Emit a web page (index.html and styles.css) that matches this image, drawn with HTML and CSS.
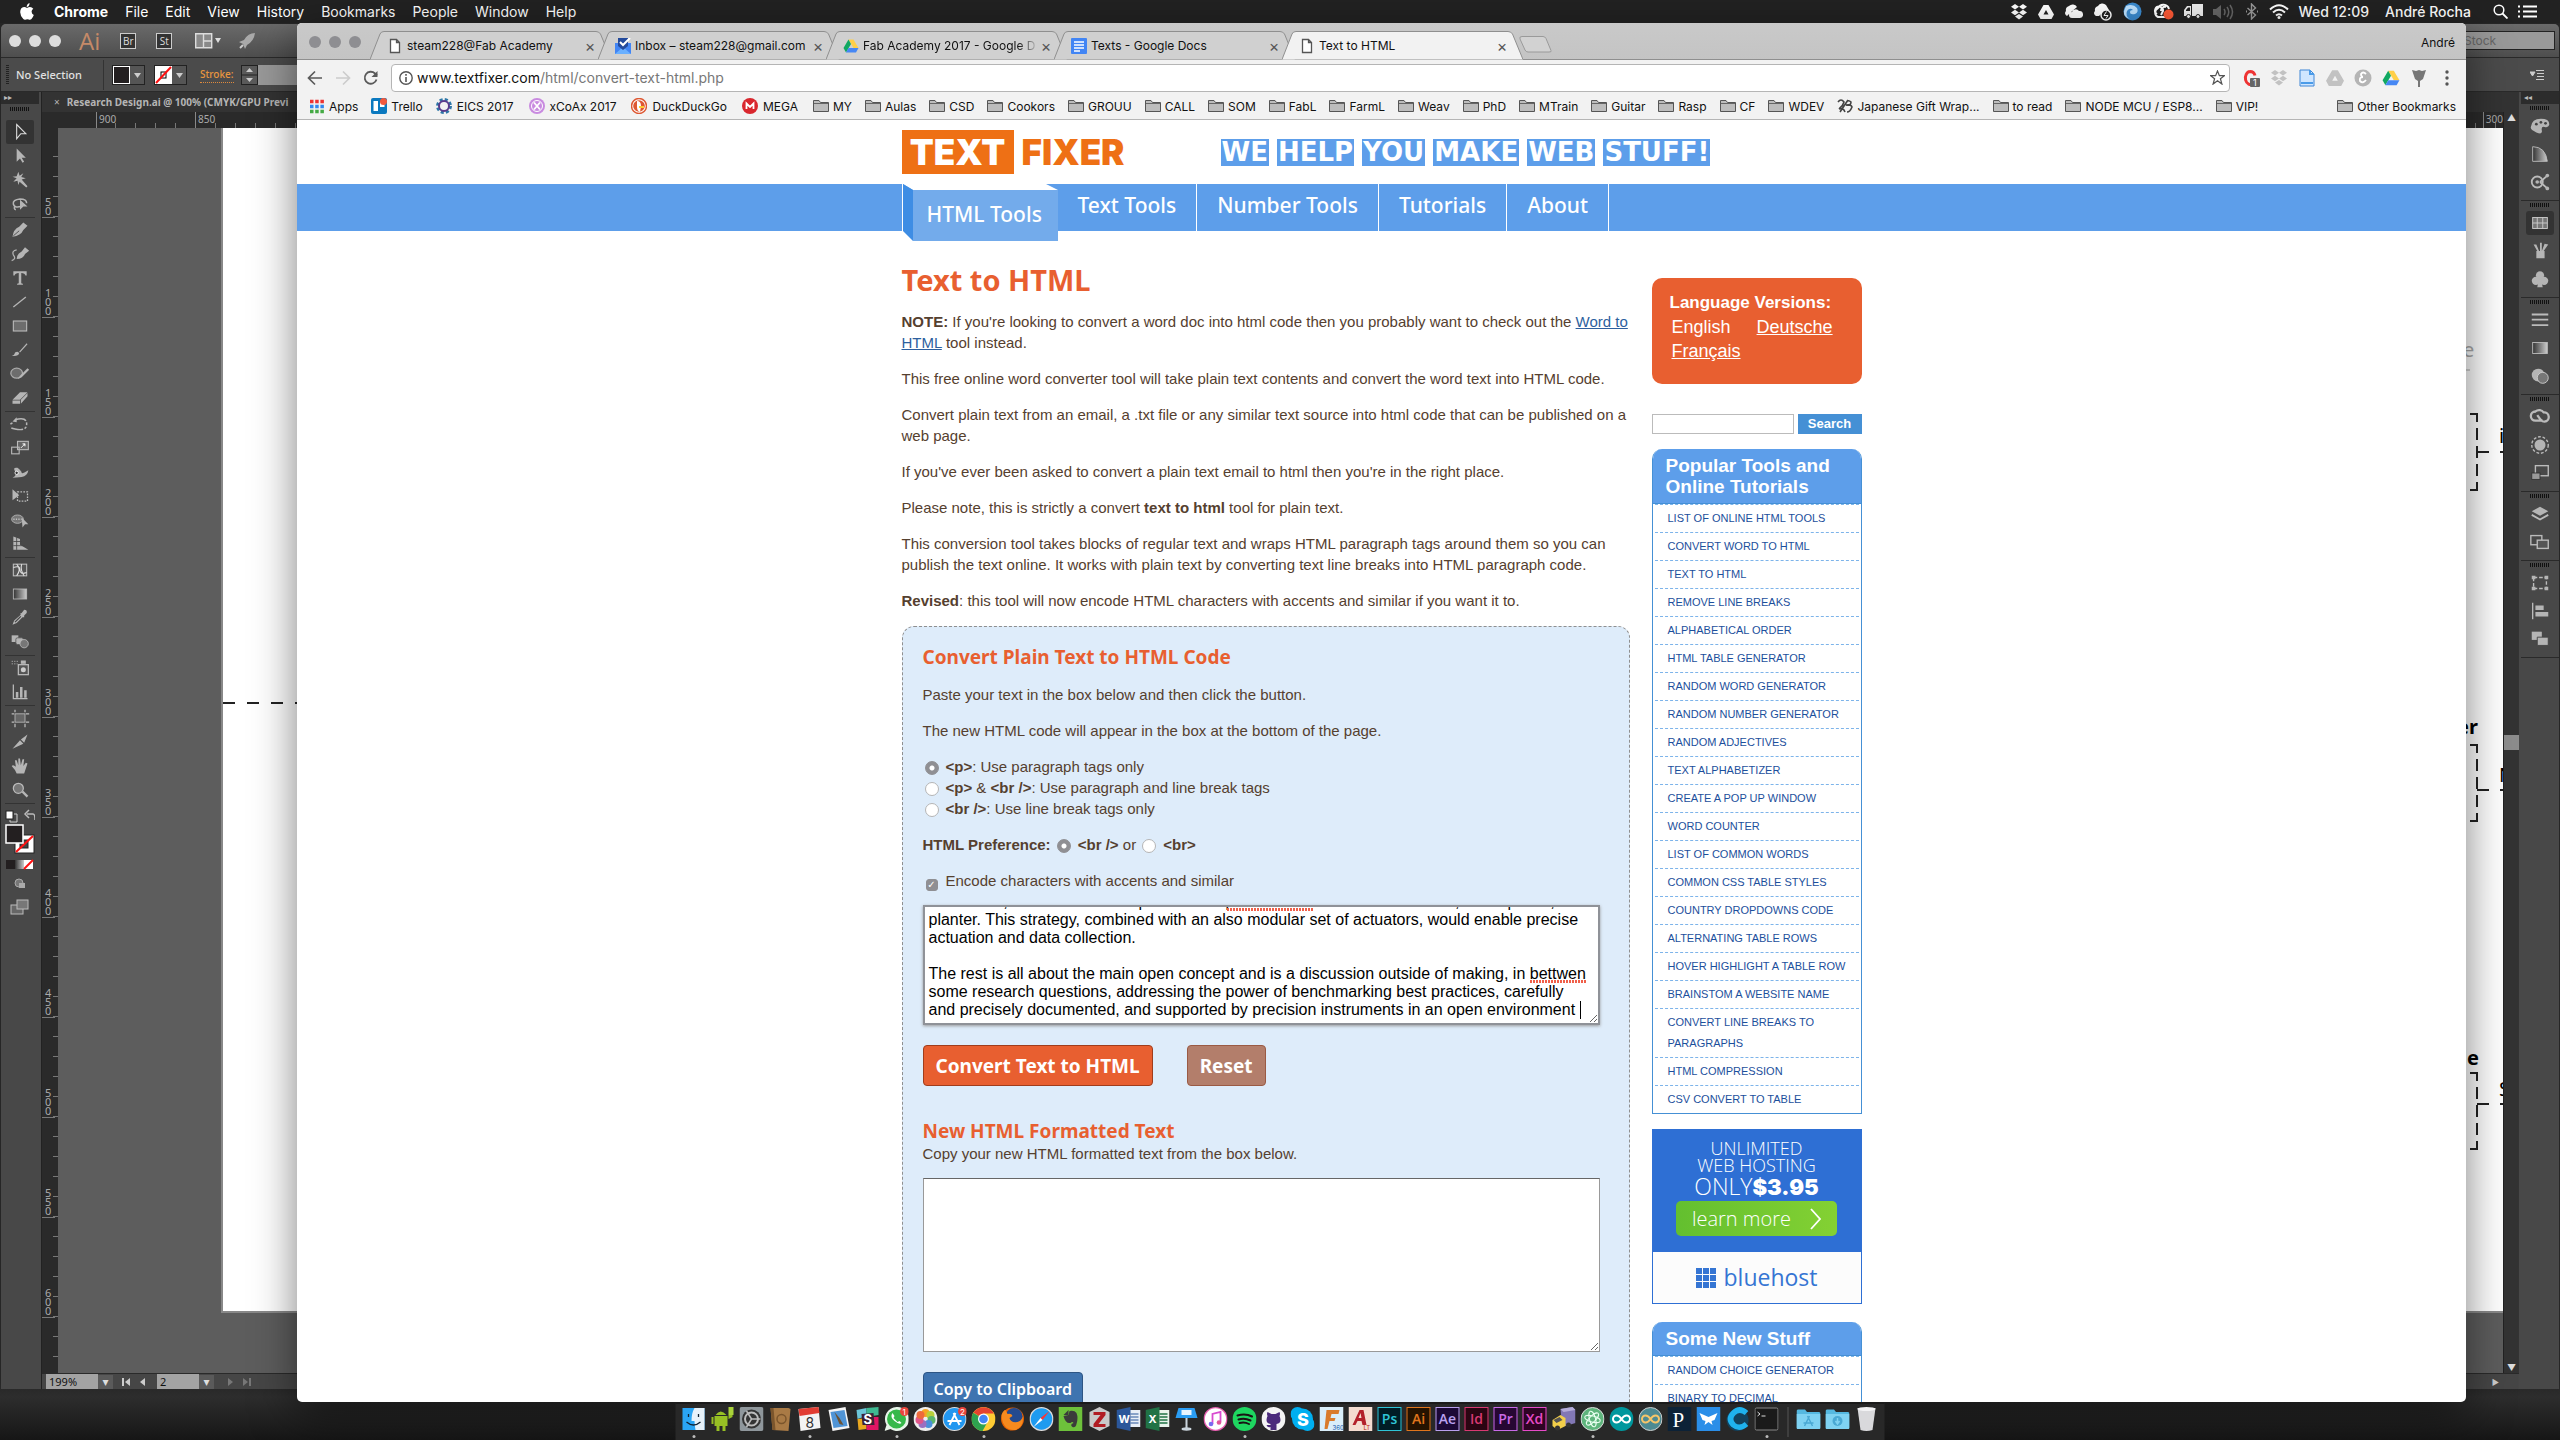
FILE: index.html
```html
<!DOCTYPE html>
<html lang="en">
<head>
<meta charset="utf-8">
<title>Text to HTML</title>
<link rel="stylesheet" href="styles.css">
</head>
<body>
<svg class="defs" width="0" height="0" aria-hidden="true">
  <defs>
    <symbol id="folder" viewBox="0 0 16 16"><path d="M.5 13.500V2.500h5.500l1.500 2h8v9z" fill="#bdbdbd" stroke="#555"/><path d="M1 5.500h14" stroke="#666"/></symbol>
    <symbol id="page" viewBox="0 0 16 16"><path d="M3.500 1.500h6l3 3v10h-9zM9.500 1.500v3h3" fill="#fff" stroke="#555" stroke-width="1.300"/></symbol>
    <symbol id="drive" viewBox="0 0 16 16"><path d="M5.500 1.500h5l5 8.500h-5z" fill="#ffcf48"/><path d="M5.500 1.500L8 6 3 14.500.5 10z" fill="#11a861"/><path d="M5.500 10h10L13 14.500H3z" fill="#4687f4"/></symbol>
    <symbol id="dropbox" viewBox="0 0 18 18"><path d="M5 1l4 2.700-4 2.700-4-2.700zM13 1l4 2.700-4 2.700-4-2.700zM5 6.800l4 2.700-4 2.700-4-2.700zM13 6.800l4 2.700-4 2.700-4-2.700zM9 11l4 2.600L9 16.500l-4-2.900z" fill="currentColor"/></symbol>
    <symbol id="drivemono" viewBox="0 0 16 16"><path d="M5.500 1h5l5.500 9.500-2.500 4.500h-11L0 10.500zM8 6l-2.500 4.500h5z" fill="currentColor" fill-rule="evenodd"/></symbol>
    <symbol id="tabshape" viewBox="0 0 241 29"><path d="M0 28.500L10 3Q11 .5 14 .5H226Q229 .5 230.500 3L241 28.500" fill="currentColor" stroke="#8f8f8f"/></symbol>
    <linearGradient id="fade" x1="0" x2="1"><stop offset="0" stop-color="#333"/><stop offset="1" stop-color="#ccc"/></linearGradient>
    <symbol id="arduino" viewBox="0 0 24 24"><path d="M12 12c-2-3-3.500-3.500-5-3.500a3.500 3.500 0 0 0 0 7c1.500 0 3-.5 5-3.500s3.500-3.500 5-3.500a3.500 3.500 0 0 1 0 7c-1.500 0-3-.5-5-3.500z" fill="none" stroke="currentColor" stroke-width="2"/></symbol>
    <symbol id="dockfolder" viewBox="0 0 24 24"><path d="M0 4q0-1.500 1.500-1.500h7l2 2.500h12q1.500 0 1.500 1.500v14q0 1.500-1.500 1.500h-21Q0 22 0 20.500z" fill="#55b8e0"/><path d="M0 7h24v13.500q0 1.500-1.500 1.500h-21Q0 22 0 20.500z" fill="#7fd2f2"/></symbol>
  </defs>
</svg>

<div class="desktop">
  <header class="menubar">
    <nav class="menus" aria-label="Application menu">
      <svg width="14" height="17" viewBox="0 0 14 17"><path d="M9.500 0Q9.700 2 8.500 3.200 7.500 4.200 6.700 4 6.600 2.500 7.600 1.300 8.500.3 9.500 0zM7 5Q8.500 4 10 4q2 0 3.300 1.700Q11.500 7 11.600 8.800 11.700 11 13.800 12q-.8 2.300-2.300 4-1.200 1.200-2.800.5Q7.400 16 6 16.500q-1.500.7-2.700-.5Q.3 13 .2 9.300.2 4.700 4 4.100 5.500 4 7 5z" fill="#fff"/></svg>
      <b>Chrome</b><span>File</span><span>Edit</span><span>View</span><span>History</span><span>Bookmarks</span><span>People</span><span>Window</span><span>Help</span>
    </nav>
    <div class="status">
      <svg width="18" height="18"><use href="#dropbox"/></svg>
      <svg width="16" height="16"><use href="#drivemono"/></svg>
      <svg width="19" height="16" viewBox="0 0 19 16"><path d="M3 12a3 3 0 0 1-1-5 4 4 0 0 1 3-5 5 5 0 0 1 8 1L6 9zM8 14a3 3 0 0 1 0-6 4 4 0 0 1 7-1 3.500 3.500 0 0 1 1 7z" fill="#fff"/></svg>
      <svg width="20" height="18" viewBox="0 0 20 18"><path d="M3 13a3 3 0 0 1-1-5 4 4 0 0 1 3-5 5 5 0 0 1 8-1l3 5-6 2-4 4z" fill="#fff"/><circle cx="13" cy="12" r="5" fill="#222" stroke="#fff" stroke-width="1.500"/><path d="M13.500 8.500l-2.500 4h4l-2 3" stroke="#fff" fill="none"/></svg>
      <svg width="19" height="19" viewBox="0 0 19 19"><circle cx="9.500" cy="9.500" r="9" fill="#3b8bd0"/><path d="M3 4q7-3 11 2 2 4-2 6-5 1-5-2 0-2 3-2-3-3-6 1-2 5 3 8-7-2-6-8z" fill="#bfe3ff"/></svg>
      <svg width="22" height="18" viewBox="0 0 22 18"><path d="M14 14H6a5 5 0 0 1 0-9 6 6 0 0 1 11 1M5 11a4 4 0 1 1 6-3l-2 4M9 8a4 4 0 0 1 5-4" fill="none" stroke="#fff" stroke-width="2"/><circle cx="16.500" cy="11.500" r="5" fill="#ff5a36"/></svg>
      <svg width="19" height="15" viewBox="0 0 19 15"><path d="M0 12V6l3-4h4v10zM8 0h11v12H8z" fill="#eee"/><path d="M2 6l2-2.500h2V7H2z" fill="#222"/><circle cx="4.500" cy="12.500" r="2" fill="#eee" stroke="#222"/><circle cx="14" cy="12.500" r="2" fill="#eee" stroke="#222"/></svg>
      <svg width="22" height="16" viewBox="0 0 22 16"><path d="M0 5h3l5-4v14l-5-4H0z" fill="#666"/><path d="M11 5q2 3 0 6M14 3q3.500 5 0 10M17 1q5 7 0 14" fill="none" stroke="#666" stroke-width="1.500"/></svg>
      <svg width="14" height="17" viewBox="0 0 14 17"><path d="M2.500 5l8 7-4 4V1l4 4-8 7" fill="none" stroke="#9a9a9a" stroke-width="1.400"/><path d="M1 8.500h1M12 8.500h1" stroke="#9a9a9a" stroke-width="2"/></svg>
      <svg width="20" height="15" viewBox="0 0 20 15"><path d="M1 5.500q9-8.500 18 0M4 8.500q6-5.500 12 0M7 11.500q3-2.500 6 0" fill="none" stroke="#fff" stroke-width="2"/><circle cx="10" cy="13.500" r="1.500" fill="#fff"/></svg>
      <span class="clock">Wed 12:09</span><span class="who">André Rocha</span>
      <svg width="15" height="15" viewBox="0 0 15 15"><circle cx="6" cy="6" r="4.800" fill="none" stroke="#fff" stroke-width="1.500"/><path d="M9.500 9.500l5 5" stroke="#fff" stroke-width="1.800"/></svg>
      <svg width="19" height="13" viewBox="0 0 19 13"><path d="M0 1.500h2M0 6.500h2M0 11.500h2M5 1.500h14M5 6.500h14M5 11.500h14" stroke="#fff" stroke-width="2"/></svg>
    </div>
  </header>

  <section class="ai" aria-label="Illustrator">
    <div class="ai-title">
      <i class="light"></i><i class="light"></i><i class="light"></i>
      <span class="ai-logo">Ai</span>
      <span class="chip">Br</span><span class="chip">St</span>
      <svg class="ai-arr" width="27" height="16" viewBox="0 0 27 16"><path d="M.7.700h16v14H.7zM8.500 1v14M9 8h8" fill="#8a8a8a" stroke="#ddd" stroke-width="1.400"/><path d="M20 5h6l-3 5z" fill="#ddd"/></svg>
      <svg width="18" height="18" viewBox="0 0 18 18"><path d="M17 1q-7 0-11 7L1 10l4 2 2 5 2-4q7-4 8-12z" fill="#aaa"/><path d="M2 16l3-3" stroke="#ccc" stroke-width="2"/></svg>
      <span class="stock">Stock</span>
    </div>
    <div class="ai-control">
      <i class="grip-v"></i><span class="nosel">No Selection</span>
      <svg width="33" height="20" viewBox="0 0 33 20"><rect x=".5" y=".5" width="32" height="19" fill="#555" stroke="#222"/><rect x="1.500" y="1.500" width="16" height="17" fill="#231f20" stroke="#fff"/><path d="M22 8h7l-3.500 5z" fill="#ccc"/></svg>
      <svg width="33" height="20" viewBox="0 0 33 20"><rect x=".5" y=".5" width="32" height="19" fill="#555" stroke="#222"/><rect x="1" y="1" width="17" height="18" fill="#fff"/><rect x="7" y="7" width="5" height="6" fill="none" stroke="#000"/><path d="M2 18L17 2" stroke="#f11" stroke-width="2"/><path d="M22 8h7l-3.500 5z" fill="#ccc"/></svg>
      <span class="stroke">Stroke:</span>
      <svg width="17" height="20" viewBox="0 0 17 20"><rect x=".5" y=".5" width="16" height="19" fill="#5a5a5a" stroke="#222"/><path d="M.5 10h16" stroke="#222"/><path d="M5 7h7L8.500 3zM5 13h7l-3.500 4z" fill="#ccc"/></svg>
      <i class="strokefield"></i>
      <svg class="ctl-menu" width="14" height="12" viewBox="0 0 14 12"><path d="M0 3h5L2.500 7zM6 1.500h8M7 4.500h7M7 7.500h7M6 10.500h8" fill="#ccc" stroke="#ccc"/></svg>
    </div>
    <div class="ai-work">
      <aside class="tools">
        <div class="coll">▸▸</div>
        <i class="grip"></i>
        <div class="tool-list">
          <div class="grp">
            <svg class="on" viewBox="0 0 24 24"><path d="M8 3l11 11h-6l-5 6z" fill="#333" stroke="#ddd" stroke-width="1.300"/></svg>
            <svg viewBox="0 0 24 24"><path d="M8 3l11 11h-5l3 5-2 1-3-5-4 4z"/></svg>
            <svg viewBox="0 0 24 24"><path d="M10 2l1.500 5L16 4l-2.500 4.500L19 10l-5 1.500 7 8-1.500 1.500-8-7L10 18l-1-5-5 1 4-4-5-2 5-.5z"/></svg>
            <svg viewBox="0 0 24 24"><path d="M13 15q-8 2-9-3t8-6q8 0 8 5M6 14q-2 4 1 5" fill="none" stroke="#b5b5b5" stroke-width="1.800"/><path d="M12 7l9 8h-5l-4 4z"/></svg>
          </div>
          <div class="grp">
            <svg viewBox="0 0 24 24"><path d="M3 20q1-9 8-12l5-5 5 4-5 5q-3 7-13 8z"/><path d="M4 19l7-6" stroke="#444"/></svg>
            <svg viewBox="0 0 24 24"><path d="M8 18q0-6 6-9l4-5 5 4-5 4q-2 6-10 6z"/><path d="M2 20q6-2 2-7-2-5 4-6" fill="none" stroke="#b5b5b5" stroke-width="1.500"/></svg>
            <svg viewBox="0 0 24 24"><path d="M4 4h16v5h-1.500q-.5-3-5-3v12q0 1 2 1v1H8.500v-1q2 0 2-1V6q-4.500 0-5 3H4z"/></svg>
            <svg viewBox="0 0 24 24"><path d="M4 18L19 6" stroke="#b5b5b5" stroke-width="1.500"/></svg>
            <svg viewBox="0 0 24 24"><rect x="4" y="6" width="16" height="12" fill="#6d6d6d" stroke="#bbb" stroke-width="1.300"/></svg>
            <svg viewBox="0 0 24 24"><path d="M2 19q3 0 4-4 4-2 5 1-1 4-9 3zM11 14l9-10 1 1-9 10z"/></svg>
            <svg viewBox="0 0 24 24"><ellipse cx="8" cy="11" rx="7" ry="6" fill="#6d6d6d" stroke="#aaa" stroke-width="1.500"/><path d="M9 18l3-4 9-9 2 2-9 9z"/></svg>
            <svg viewBox="0 0 24 24"><path d="M3 14l9-9h9l-9 9zM3 15h9v4H3zM13 14l8-8v4l-8 9z"/></svg>
          </div>
          <div class="grp">
            <svg viewBox="0 0 24 24"><path d="M6 7q14-4 14 5t-14 6-1-8" fill="none" stroke="#b5b5b5" stroke-width="1.800" stroke-dasharray="14 2 3 2 3 2"/><path d="M3 9l5-5v6z"/></svg>
            <svg viewBox="0 0 24 24"><rect x="9" y="4" width="13" height="10" fill="#666" stroke="#bbb" stroke-width="1.300"/><rect x="2" y="11" width="9" height="8" fill="none" stroke="#bbb" stroke-width="1.300"/><path d="M13 12l5-5M15 7h3v3" stroke="#fff"/></svg>
            <svg viewBox="0 0 24 24"><path d="M3 19q6-3 3-8t3-4q5 4 5 6t8-3q-1 7-8 8t-11 1z"/><circle cx="8" cy="13" r="2" fill="#333" stroke="#fff"/></svg>
            <svg viewBox="0 0 24 24"><path d="M3 4l8 7-8 6z"/><rect x="9" y="7" width="12" height="11" fill="none" stroke="#bbb" stroke-dasharray="2 1.500" stroke-width="1.500"/></svg>
            <svg viewBox="0 0 24 24"><ellipse cx="9" cy="11" rx="7" ry="5" fill="#777" stroke="#bbb"/><path d="M4 11h10" stroke="#fff" stroke-dasharray="1.500"/><path d="M14 9l8 8h-4l-3 4z"/></svg>
            <svg viewBox="0 0 24 24"><path d="M4 3l8 3v7l10 6H4z"/><path d="M4 9h10M4 14h14M8 4v15" stroke="#444"/></svg>
          </div>
          <div class="grp">
            <svg viewBox="0 0 24 24"><rect x="4" y="5" width="16" height="14" fill="#555" stroke="#bbb" stroke-width="1.300"/><path d="M4 9q8-3 8 3t8 3M8 5q6 6 0 14M14 5q-2 7 3 14" fill="none" stroke="#ddd" stroke-width="1.300"/></svg>
            <svg viewBox="0 0 24 24"><rect x="4" y="6" width="16" height="12" fill="url(#fade)" stroke="#bbb"/></svg>
            <svg viewBox="0 0 24 24"><path d="M3 20l2-5 8-7-1-1 2-1 3-4q4 0 3 4l-3 3 0 2-2 0-7 7z"/><path d="M6 17l7-7" stroke="#444" stroke-width="1.500"/></svg>
            <svg viewBox="0 0 24 24"><rect x="2" y="4" width="8" height="8"/><rect x="7" y="7" width="9" height="8" rx="2" stroke="#555"/><circle cx="17" cy="14" r="5" fill="#777" stroke="#bbb"/></svg>
          </div>
          <div class="grp">
            <svg viewBox="0 0 24 24"><rect x="10" y="8" width="12" height="12" fill="#555" stroke="#bbb" stroke-width="1.500"/><circle cx="16" cy="14" r="3" fill="#ccc"/><rect x="13" y="3" width="6" height="4"/><path d="M2 4h9M2 7h7" stroke="#bbb" stroke-dasharray="1.500"/></svg>
            <svg viewBox="0 0 24 24"><path d="M4 3v17h17" fill="none" stroke="#bbb" stroke-width="1.500"/><path d="M7 12h3v7H7zM12 6h3v13h-3zM17 10h3v9h-3z"/></svg>
          </div>
          <div class="grp">
            <svg viewBox="0 0 24 24"><rect x="6" y="7" width="12" height="10" fill="#666" stroke="#bbb"/><path d="M2 7h3M2 17h3M19 7h4M19 17h4M6 2v3M18 2v3M6 19v4M18 19v4" stroke="#bbb" stroke-width="1.500"/></svg>
            <svg viewBox="0 0 24 24"><path d="M3 20l9-10 4 4zM13 9l8-6-4 10z"/></svg>
            <svg viewBox="0 0 24 24"><path d="M8 21q-2-5-6-9 2-2 5 1L6 5h2l2 6V3h2l1 8 2-7h2l-1 8 3-4 2 1-4 12z"/></svg>
            <svg viewBox="0 0 24 24"><ellipse cx="10" cy="10" rx="6" ry="6" fill="#777" stroke="#bbb" stroke-width="1.500"/><path d="M14 15l2-2 6 6-2 2z"/></svg>
          </div>
          <div class="swatches">
            <svg width="30" height="110" viewBox="0 0 30 110"><rect x="1" y="3" width="7" height="8" fill="#fff" stroke="#222"/><path d="M9 6h3v8H5v-2" fill="none" stroke="#ccc"/><path d="M22 6h6q2 0 2 6M24 2l-4 4 4 4" fill="none" stroke="#bbb" stroke-width="1.500"/><rect x="10" y="27" width="19" height="18" fill="#fff" stroke="#222"/><rect x="15" y="32" width="8" height="8" fill="#444" stroke="#222"/><path d="M11 44L28 28" stroke="#f11" stroke-width="2"/><rect x="1" y="17" width="17" height="18" fill="#231f20" stroke="#fff" stroke-width="1.500"/><rect x="1" y="52" width="9" height="9" fill="#231f20"/><rect x="10" y="52" width="9" height="9" fill="url(#fade)"/><rect x="19" y="52" width="9" height="9" fill="#fff"/><path d="M19 61l9-9" stroke="#f11" stroke-width="2"/><circle cx="14" cy="75" r="4" fill="#777" stroke="#aaa"/><rect x="14" y="75" width="6" height="5" fill="#aaa"/><rect x="6" y="97" width="12" height="9" fill="#666" stroke="#bbb"/><rect x="12" y="92" width="11" height="9" fill="#777" stroke="#bbb"/></svg>
          </div>
        </div>
      </aside>
      <div class="doc">
        <div class="doctab"><span>×</span><b>Research Design.ai @ 100% (CMYK/GPU Previ</b></div>
        <div class="ruler-h"><span>900</span><span>850</span><span class="r300">300</span></div>
        <div class="docbody">
          <div class="ruler-v"><span>50</span><span>100</span><span>150</span><span>200</span><span>250</span><span>300</span><span>350</span><span>400</span><span>450</span><span>500</span><span>550</span><span>600</span></div>
          <div class="canvas">
            <div class="artboard"><i class="cutline"></i>
              <svg class="diagram" width="40" height="820" viewBox="0 0 40 820"><g fill="none" stroke="#222" stroke-width="2"><path d="M7 72h7v8M14 86v12M14 104v12M14 122v12M14 140v8H7M14 110h12M37 110h3M7 403h7v8M14 417v12M14 435v12M14 453v12M14 471v8H7M14 448h12M37 448h3M7 731h7v8M14 745v12M14 763v12M14 781v12M14 799v8H7M14 762h12M37 762h3"/></g><text x="0" y="15" fill="#aaa">e</text><path d="M0 28h7" stroke="#aaa"/><text x="36" y="101">in</text><text x="-6" y="392" font-weight="700">er</text><text x="36" y="440">N</text><text x="-2" y="723" font-weight="700">le</text><text x="36" y="754">S</text></svg>
            </div>
          </div>
          <div class="vscroll"><span>▲</span><i></i><span>▼</span></div>
        </div>
        <div class="statusbar"><span class="zoomv">199%</span><i class="dd">▾</i>
          <svg width="32" height="10" viewBox="0 0 32 10"><path d="M1 1h2v8H1zM9 1v8L4 5zM24 1v8l-5-4z" fill="#ccc"/></svg>
          <span class="pagev">2</span><i class="dd">▾</i>
          <svg width="32" height="10" viewBox="0 0 32 10"><path d="M6 1v8l5-4zM21 1v8l5-4zM27 1h2v8h-2z" fill="#777"/></svg><i class="play">▶</i></div>
      </div>
      <aside class="panels">
        <div class="coll">◂◂</div>
        <div class="pg"><i class="grip"></i>
          <svg viewBox="0 0 24 24"><path d="M2 13Q3 4 13 4t9 7q-1 3-5 2t-3 4-6 2-6-6z"/><circle cx="8" cy="10" r="1.500" fill="#444"/><circle cx="13" cy="8" r="1.500" fill="#444"/><circle cx="18" cy="9" r="1.500" fill="#444"/></svg>
          <svg viewBox="0 0 24 24"><path d="M4 4q14 0 16 16H4z" fill="url(#fade)" stroke="#bbb"/></svg>
          <svg viewBox="0 0 24 24"><circle cx="9" cy="12" r="6" fill="none" stroke="#bbb" stroke-width="2"/><circle cx="9" cy="12" r="2"/><path d="M12 12l8-7M12 12l8 7" stroke="#bbb" stroke-width="2"/><circle cx="20" cy="5" r="2"/><circle cx="20" cy="19" r="2"/></svg></div>
        <div class="pg"><i class="grip"></i>
          <svg class="on" viewBox="0 0 24 24"><rect x="4" y="6" width="16" height="12" fill="#777" stroke="#ccc"/><path d="M4 12h16M9 6v12M15 6v12" stroke="#ccc"/></svg>
          <svg viewBox="0 0 24 24"><path d="M8 12h9v8H8zM9 12L5 5l3 0 3 7zM12 12V3h2v9zM14 12l3-8 4 1-5 7z"/></svg>
          <svg viewBox="0 0 24 24"><circle cx="12" cy="8" r="4.500"/><circle cx="7.500" cy="14" r="4.500"/><circle cx="16.500" cy="14" r="4.500"/><path d="M11 12h2l2 9H9z"/></svg></div>
        <div class="pg"><i class="grip"></i>
          <svg viewBox="0 0 24 24"><path d="M3 6h18M3 11.500h18M3 17.500h18" stroke="#bbb" stroke-width="2"/></svg>
          <svg viewBox="0 0 24 24"><rect x="4" y="6" width="16" height="12" fill="url(#fade)" stroke="#bbb"/></svg>
          <svg viewBox="0 0 24 24"><circle cx="10" cy="11" r="7"/><circle cx="15" cy="14" r="6" fill="#777" stroke="#ccc"/></svg></div>
        <div class="pg"><i class="grip"></i>
          <svg viewBox="0 0 24 24"><path d="M15 16H7a5 5 0 0 1 0-10 6 6 0 0 1 9 1 5 5 0 0 1 1 10q-3 0-5-3l-3-4" fill="none" stroke="#bbb" stroke-width="2.500"/></svg>
          <svg viewBox="0 0 24 24"><circle cx="12" cy="12" r="9" fill="none" stroke="#bbb" stroke-width="1.500" stroke-dasharray="3 2"/><circle cx="12" cy="12" r="6"/></svg>
          <svg viewBox="0 0 24 24"><rect x="7" y="4" width="14" height="11" fill="none" stroke="#bbb" stroke-width="1.500"/><rect x="3" y="12" width="9" height="7" fill="#999" stroke="#333"/></svg></div>
        <div class="pg"><i class="grip"></i>
          <svg viewBox="0 0 24 24"><path d="M12 4l9 5-9 5-9-5z"/><path d="M3 13l9 5 9-5" fill="none" stroke="#bbb" stroke-width="2"/></svg>
          <svg viewBox="0 0 24 24"><rect x="2" y="5" width="12" height="10" fill="none" stroke="#bbb" stroke-width="1.500"/><rect x="9" y="10" width="12" height="9" fill="#555" stroke="#bbb" stroke-width="1.500"/></svg></div>
        <div class="pg"><i class="grip"></i>
          <svg viewBox="0 0 24 24"><rect x="5" y="6" width="14" height="12" fill="none" stroke="#bbb" stroke-width="1.500" stroke-dasharray="4 2"/><path d="M3 4h4v4H3zM17 4h4v4h-4zM3 16h4v4H3zM17 16h4v4h-4z"/></svg>
          <svg viewBox="0 0 24 24"><path d="M4 3v18" stroke="#bbb" stroke-width="1.500"/><path d="M7 6h9v5H7zM7 13h14v5H7z"/></svg>
          <svg viewBox="0 0 24 24"><path d="M3 4h11v9H3z"/><path d="M9 10h12v9H9z" stroke="#444"/></svg></div>
      </aside>
    </div>
  </section>

  <section class="chrome" aria-label="Browser">
    <div class="tabstrip">
      <i class="dot"></i><i class="dot"></i><i class="dot"></i>
      <div class="tabs">
        <div class="tab"><svg class="shape"><use href="#tabshape"/></svg><svg class="fav"><use href="#page"/></svg><span>steam228@Fab Academy</span><button aria-label="Close">×</button></div>
        <div class="tab"><svg class="shape"><use href="#tabshape"/></svg><svg class="fav" viewBox="0 0 16 16"><path d="M0 5h16v11H0z" fill="#4285f4"/><path d="M0 16l8-7 8 7z" fill="#6ab0ff"/><path d="M3 0h10v8l-5 4-5-4z" fill="#234a9c"/><path d="M5 4l3 3 7-7" fill="none" stroke="#fff" stroke-width="2"/></svg><span>Inbox – steam228@gmail.com</span><button aria-label="Close">×</button></div>
        <div class="tab"><svg class="shape"><use href="#tabshape"/></svg><svg class="fav"><use href="#drive"/></svg><span class="long">Fab Academy 2017 - Google D</span><button aria-label="Close">×</button></div>
        <div class="tab"><svg class="shape"><use href="#tabshape"/></svg><svg class="fav" viewBox="0 0 16 16"><rect width="16" height="16" rx="1" fill="#4285f4"/><path d="M3 4h10M3 7h10M3 10h10M3 13h6" stroke="#fff" stroke-width="1.300"/></svg><span>Texts - Google Docs</span><button aria-label="Close">×</button></div>
        <div class="tab active"><svg class="shape"><use href="#tabshape"/></svg><svg class="fav"><use href="#page"/></svg><span>Text to HTML</span><button aria-label="Close">×</button></div>
      </div>
      <svg class="newtab" width="34" height="17" viewBox="0 0 34 17"><path d="M1 3Q0 .5 3 .5H24q2 0 3 2l5 12q1 1.500-2 1.500H9q-2 0-3-2z" fill="#d2d2d2" stroke="#9a9a9a"/></svg>
      <span class="profile">André</span>
    </div>
    <div class="toolbar">
      <button aria-label="Back"><svg width="16" height="16" viewBox="0 0 16 16"><path d="M15 8H2M8 1.500L1.500 8 8 14.500" fill="none" stroke="#5a5a5a" stroke-width="1.700"/></svg></button>
      <button aria-label="Forward"><svg width="16" height="16" viewBox="0 0 16 16"><path d="M1 8h13M8 1.500L14.500 8 8 14.500" fill="none" stroke="#ccc" stroke-width="1.700"/></svg></button>
      <button aria-label="Reload"><svg width="16" height="16" viewBox="0 0 16 16"><path d="M13.500 9.500A6 6 0 1 1 12 3.500L14 5.500" fill="none" stroke="#5a5a5a" stroke-width="1.800"/><path d="M14.500 1v6h-6z" fill="#5a5a5a"/></svg></button>
      <div class="urlbar">
        <svg width="14" height="14" viewBox="0 0 14 14"><circle cx="7" cy="7" r="6.200" fill="none" stroke="#555" stroke-width="1.400"/><path d="M7 6v5M7 3v1.700" stroke="#555" stroke-width="1.600"/></svg>
        <span class="url"><b>www.textfixer.com</b>/html/convert-text-html.php</span>
        <svg width="15" height="15" viewBox="0 0 16 16"><path d="M8 1l2 5h5.300l-4.200 3.300L12.700 15 8 11.500 3.300 15l1.600-5.700L.7 6H6z" fill="none" stroke="#555" stroke-width="1.300"/></svg>
      </div>
      <div class="exts">
        <svg viewBox="0 0 18 18"><path d="M8 2.500a5 6.500 0 1 0 3 12M8 2.500q4 0 5 4" fill="none" stroke="#e33" stroke-width="3"/><rect x="8" y="9" width="10" height="9" rx="1" fill="#666"/><text x="11" y="17" font-size="9" fill="#fff" font-family="Inter">1</text></svg>
        <svg class="grey"><use href="#dropbox"/></svg>
        <svg viewBox="0 0 18 18"><path d="M2 1h10l4 4v12H2z" fill="#cfe6ff" stroke="#3f86d6"/><path d="M12 1v4h4M3 14h12" fill="none" stroke="#4a9be8" stroke-width="2"/></svg>
        <svg class="grey"><use href="#drivemono"/></svg>
        <svg viewBox="0 0 18 18"><circle cx="9" cy="9" r="8.500" fill="#b5b5b5"/><path d="M12 5q-3-3-5 0 0 3 2 3-4 0-3 4 3 3 6-1" fill="none" stroke="#fff" stroke-width="1.800"/></svg>
        <svg><use href="#drive"/></svg>
        <svg viewBox="0 0 18 18"><path d="M2 1l4 1 3-1 3 1 4-1-3 9-3 2v6H8v-6l-3-2z" fill="#777"/></svg>
        <svg viewBox="0 0 18 18"><circle cx="9" cy="3" r="1.700" fill="#555"/><circle cx="9" cy="9" r="1.700" fill="#555"/><circle cx="9" cy="15" r="1.700" fill="#555"/></svg>
      </div>
    </div>
    <nav class="bookmarks" aria-label="Bookmarks">
      <a href="#"><svg viewBox="0 0 16 16"><path d="M1 3.500h14" stroke="#e33" stroke-width="3.500" stroke-dasharray="3.500 1.700"/><path d="M1 8.500h14" stroke="#38e" stroke-width="3.500" stroke-dasharray="3.500 1.700"/><path d="M1 13.500h14" stroke="#4a4" stroke-width="3.500" stroke-dasharray="3.500 1.700"/></svg>Apps</a>
      <a href="#"><svg viewBox="0 0 16 16"><rect y="0" width="16" height="16" rx="2" fill="#0b79bf"/><path d="M2.500 3h4.500v10H2.500zM9 3h4.500v6H9z" fill="#fff"/><circle cx="12.500" cy="3.500" r="3.500" fill="#f1583c"/></svg>Trello</a>
      <a href="#" class="site"><svg viewBox="0 0 16 16"><circle cx="8" cy="8" r="6.500" fill="none" stroke="#2d77a8" stroke-width="3" stroke-dasharray="3 2.100"/><circle cx="8" cy="8" r="5" fill="none" stroke="#5a3b8c" stroke-width="2"/></svg>EICS 2017</a>
      <a href="#" class="site"><svg viewBox="0 0 16 16"><circle cx="8" cy="8" r="8" fill="#c98be0"/><circle cx="8" cy="8" r="5.500" fill="none" stroke="#fff"/><path d="M5 4.500l6 7M11 4.500l-6 7" stroke="#fff" stroke-width="1.800"/></svg>xCoAx 2017</a>
      <a href="#" class="site"><svg viewBox="0 0 16 16"><circle cx="8" cy="8" r="7.500" fill="#fff" stroke="#de5833" stroke-width="1.500"/><circle cx="8" cy="8" r="5.800" fill="#de5833"/><path d="M6 3q4 0 4 5l-1 6q-3-1-3-5z" fill="#fff"/><path d="M8 8h5v2H8z" fill="#fc3"/></svg>DuckDuckGo</a>
      <a href="#" class="site"><svg viewBox="0 0 16 16"><circle cx="8" cy="8" r="8" fill="#d9272e"/><path d="M4.500 11V5.500L8 9l3.500-3.500V11" fill="none" stroke="#fff" stroke-width="1.800"/></svg>MEGA</a>
      <a href="#"><svg><use href="#folder"/></svg>MY</a>
      <a href="#"><svg><use href="#folder"/></svg>Aulas</a>
      <a href="#"><svg><use href="#folder"/></svg>CSD</a>
      <a href="#"><svg><use href="#folder"/></svg>Cookors</a>
      <a href="#"><svg><use href="#folder"/></svg>GROUU</a>
      <a href="#"><svg><use href="#folder"/></svg>CALL</a>
      <a href="#"><svg><use href="#folder"/></svg>SOM</a>
      <a href="#"><svg><use href="#folder"/></svg>FabL</a>
      <a href="#"><svg><use href="#folder"/></svg>FarmL</a>
      <a href="#"><svg><use href="#folder"/></svg>Weav</a>
      <a href="#"><svg><use href="#folder"/></svg>PhD</a>
      <a href="#"><svg><use href="#folder"/></svg>MTrain</a>
      <a href="#"><svg><use href="#folder"/></svg>Guitar</a>
      <a href="#"><svg><use href="#folder"/></svg>Rasp</a>
      <a href="#"><svg><use href="#folder"/></svg>CF</a>
      <a href="#"><svg><use href="#folder"/></svg>WDEV</a>
      <a href="#"><svg viewBox="0 0 16 16"><path d="M1 4q3-4 6 0-1 4-5 7 4-2 6 3M9 5q2-4 5-1 0 4-5 3 5-1 6 2-2 5-5 5M3 14l8-12" fill="none" stroke="#444" stroke-width="1.600"/></svg>Japanese Gift Wrap...</a>
      <a href="#"><svg><use href="#folder"/></svg>to read</a>
      <a href="#"><svg><use href="#folder"/></svg>NODE MCU / ESP8...</a>
      <a href="#"><svg><use href="#folder"/></svg>VIP!</a>
      <a href="#" class="other"><svg><use href="#folder"/></svg>Other Bookmarks</a>
    </nav>

    <div class="page">
      <div class="masthead wrap">
        <div class="logo"><span>TEXT</span><b>FIXER</b></div>
        <div class="slogan"><span>WE</span><span>HELP</span><span>YOU</span><span>MAKE</span><span>WEB</span><span>STUFF!</span></div>
      </div>
      <div class="navband">
        <nav class="wrap mainnav" aria-label="Main">
          <a href="#" class="current"><svg width="155" height="57" viewBox="0 0 155 57"><path d="M0 0H143L155 6H10z" fill="#fff"/><path d="M0 0L10 6V57L0 47z" fill="#3e8de4"/><path d="M10 6H155V57H10z" fill="#73abeb"/></svg><span>HTML Tools</span></a>
          <a href="#">Text Tools</a><a href="#">Number Tools</a><a href="#">Tutorials</a><a href="#">About</a>
        </nav>
      </div>
      <div class="wrap columns">
        <main>
          <h1>Text to HTML</h1>
          <p><b>NOTE:</b> If you're looking to convert a word doc into html code then you probably want to check out the <a href="#">Word to HTML</a> tool instead.</p>
          <p>This free online word converter tool will take plain text contents and convert the word text into HTML code.</p>
          <p>Convert plain text from an email, a .txt file or any similar text source into html code that can be published on a web page.</p>
          <p>If you've ever been asked to convert a plain text email to html then you're in the right place.</p>
          <p>Please note, this is strictly a convert <b>text to html</b> tool for plain text.</p>
          <p>This conversion tool takes blocks of regular text and wraps HTML paragraph tags around them so you can publish the text online. It works with plain text by converting text line breaks into HTML paragraph code.</p>
          <p><b>Revised</b>: this tool will now encode HTML characters with accents and similar if you want it to.</p>
          <form class="converter">
            <h2>Convert Plain Text to HTML Code</h2>
            <p>Paste your text in the box below and then click the button.</p>
            <p>The new HTML code will appear in the box at the bottom of the page.</p>
            <div class="opts">
              <label><input type="radio" name="mode" checked><b>&lt;p&gt;</b>: Use paragraph tags only</label>
              <label><input type="radio" name="mode"><b>&lt;p&gt;</b> &amp; <b>&lt;br /&gt;</b>: Use paragraph and line break tags</label>
              <label><input type="radio" name="mode"><b>&lt;br /&gt;</b>: Use line break tags only</label>
            </div>
            <div class="pref"><b>HTML Preference: </b><label><input type="radio" name="br" checked><b>&lt;br /&gt;</b></label> or <label><input type="radio" name="br"><b>&lt;br&gt;</b></label></div>
            <div class="enc"><label><input type="checkbox" checked>Encode characters with accents and similar</label></div>
            <div class="source">
              <textarea id="source" aria-label="Plain text" spellcheck="false">
The system would be built around small modular units that can be combined
as needed, in order to collect precise and personalized data from each are, set of plants, or
planter. This strategy, combined with an also modular set of actuators, would enable precise
actuation and data collection.

The rest is all about the main open concept and is a discussion outside of making, in bettwen
some research questions, addressing the power of benchmarking best practices, carefully
and precisely documented, and supported by precision instruments in an open environment </textarea>
              <i class="typo typo-top"></i><i class="typo typo-mid"></i><i class="caret"></i>
            </div>
            <div class="buttons"><button type="button" class="btn go">Convert Text to HTML</button><button type="button" class="btn reset">Reset</button></div>
            <h2>New HTML Formatted Text</h2>
            <label class="copyhint" for="result">Copy your new HTML formatted text from the box below.</label>
            <textarea id="result"></textarea>
            <button type="button" class="btn clip">Copy to Clipboard</button>
          </form>
        </main>
        <aside class="side">
          <div class="lang"><b>Language Versions:</b><div><span>English</span><a href="#">Deutsche</a><a href="#">Français</a></div></div>
          <form class="search"><input type="text" aria-label="Search site"><button type="button">Search</button></form>
          <section class="box"><h3>Popular Tools and Online Tutorials</h3>
            <ul><li><a href="#">List of online html tools</a></li><li><a href="#">Convert word to html</a></li><li><a href="#">Text to html</a></li><li><a href="#">Remove line breaks</a></li><li><a href="#">Alphabetical order</a></li><li><a href="#">HTML table generator</a></li><li><a href="#">Random word generator</a></li><li><a href="#">Random number generator</a></li><li><a href="#">Random adjectives</a></li><li><a href="#">Text alphabetizer</a></li><li><a href="#">Create a pop up window</a></li><li><a href="#">Word counter</a></li><li><a href="#">List of common words</a></li><li><a href="#">Common css table styles</a></li><li><a href="#">Country dropdowns code</a></li><li><a href="#">Alternating table rows</a></li><li><a href="#">Hover highlight a table row</a></li><li><a href="#">Brainstom a website name</a></li><li><a href="#">Convert line breaks to paragraphs</a></li><li><a href="#">Html compression</a></li><li><a href="#">CSV convert to table</a></li></ul>
          </section>
          <a href="#" class="ad">
            <span class="ad-top"><span class="l1">UNLIMITED</span><span class="l1">WEB HOSTING</span><span class="l2">ONLY<b>$3.95</b></span><span class="learn">learn more<svg width="12" height="24" viewBox="0 0 12 24"><path d="M2 2l9 10-9 10" fill="none" stroke="#fff" stroke-width="1.800"/></svg></span></span>
            <span class="ad-bot"><svg width="20" height="20" viewBox="0 0 20 20"><path d="M0 0h6v6H0zM7 0h6v6H7zM14 0h6v6h-6zM0 7h6v6H0zM7 7h6v6H7zM14 7h6v6h-6zM0 14h6v6H0zM7 14h6v6H7zM14 14h6v6h-6z" fill="#3575d3"/></svg>bluehost</span>
          </a>
          <section class="box"><h3>Some New Stuff</h3>
            <ul><li><a href="#">Random choice generator</a></li><li><a href="#">Binary to decimal</a></li></ul>
          </section>
        </aside>
      </div>
    </div>
  </section>

  <footer class="dock">
    <span class="app run"><svg viewBox="0 0 24 24"><path d="M1 1h22v22H1z" fill="#2aa5f5"/><path d="M13 1h10v22H14q-1-5-1-9h-3q0-8 3-13z" fill="#e6f1fa"/><path d="M7 7v3M17 7v3M5 15q7 6 14 0" fill="none" stroke="#123" stroke-width="1.300"/></svg></span>
    <span class="app"><svg viewBox="0 0 24 24"><path d="M4 9h13v10H4zM5 8q5-7 11 0zM1 10h2v7H1zM18 8h2v-5h2v7l-4 2zM6 19h3v5H6zM12 19h3v5h-3z" fill="#97c024"/><rect x="18" y="0" width="5" height="8" fill="#a9d33a"/></svg></span>
    <span class="app"><svg viewBox="0 0 24 24"><rect width="24" height="24" rx="2" fill="#8f979c"/><circle cx="12" cy="12" r="9.500" fill="#333"/><circle cx="12" cy="12" r="6.500" fill="none" stroke="#bbb" stroke-width="2"/><path d="M12 12L7 4M12 12h9M12 12l-5 8" stroke="#bbb" stroke-width="1.500"/></svg></span>
    <span class="app"><svg viewBox="0 0 24 24"><path d="M2 1h18l2 1-2 22-16-1z" fill="#a97a45"/><path d="M2 1h3l2 22-3 0z" fill="#7b552c"/><circle cx="13" cy="12" r="4.500" fill="none" stroke="#7b552c" stroke-width="1.500"/></svg></span>
    <span class="app run"><svg viewBox="0 0 24 24"><path d="M1 2l20-2 2 21-20 3z" fill="#f4f4f4"/><path d="M1 2l20-2 1 6L2 9z" fill="#e23d33"/><text x="8" y="21" font-size="14" font-family="Inter" fill="#333">8</text></svg></span>
    <span class="app"><svg viewBox="0 0 24 24"><path d="M2 3l17-3 4 21-17 3z" fill="#f4f4f4"/><path d="M4 5l14-2 3 16-14 2z" fill="#4f94d6"/><path d="M8 5l5 6 4 7-4-1-3-7z" fill="#6b5234"/></svg></span>
    <span class="app"><svg viewBox="0 0 24 24"><path d="M1 3l10-2v8l-9 3z" fill="#6cc5d8"/><path d="M11 1l12-1v8l-12 2z" fill="#3eb991"/><path d="M2 12l9-1v11l-8 1z" fill="#e9a820"/><path d="M11 10h12v13H11z" fill="#e01563"/><path d="M6 7l12-1 1 12H7z" fill="#3b2038"/><text x="8" y="17" font-size="13" font-weight="700" font-family="Inter" fill="#fff">S</text></svg></span>
    <span class="app run"><svg viewBox="0 0 24 24"><path d="M12 0a12 12 0 1 1-6 22l-6 2 2-6A12 12 0 0 1 12 0z" fill="#e9f5ea"/><circle cx="12" cy="12" r="9.500" fill="#36b84a"/><path d="M8 6q-3 4 2 8t7 2l-2-2-2 1-4-4 1-2z" fill="#fff"/><circle cx="20" cy="4.500" r="4.500" fill="#e8453c"/><text x="18" y="8" font-size="8" font-family="Inter" fill="#fff">1</text></svg></span>
    <span class="app"><svg viewBox="0 0 24 24"><circle cx="12" cy="12" r="12" fill="#eee"/><circle cx="12" cy="6" r="4" fill="#f5a623"/><circle cx="17" cy="8" r="4" fill="#b8cf3a"/><circle cx="18" cy="13" r="4" fill="#5ab56b"/><circle cx="15" cy="17" r="4" fill="#4a90d9"/><circle cx="9" cy="17" r="4" fill="#9b6fc0"/><circle cx="6" cy="13" r="4" fill="#e0558a"/><circle cx="7" cy="8" r="4" fill="#ee6a3c"/></svg></span>
    <span class="app"><svg viewBox="0 0 24 24"><circle cx="12" cy="12" r="12" fill="#ddd"/><circle cx="12" cy="12" r="11" fill="#2297f0"/><path d="M7 18l6-12M11 6l6 12M5 14h14" stroke="#fff" stroke-width="1.800"/><circle cx="20" cy="4.500" r="4.500" fill="#e8453c"/><text x="17.500" y="8" font-size="8" font-family="Inter" fill="#fff">2</text></svg></span>
    <span class="app run"><svg viewBox="0 0 24 24"><circle cx="12" cy="12" r="12" fill="#fc3"/><path d="M12 12L2 5.500A12 12 0 0 1 22.500 6.500H12z" fill="#e5432f"/><path d="M12 12L1.800 5.700A12 12 0 0 0 11 24l5-9z" fill="#2ea24f"/><circle cx="12" cy="12" r="5.500" fill="#fff"/><circle cx="12" cy="12" r="4.300" fill="#4285f4"/></svg></span>
    <span class="app"><svg viewBox="0 0 24 24"><circle cx="12" cy="12" r="11.500" fill="#e66000"/><circle cx="13.500" cy="9.500" r="8.500" fill="#234a8f"/><path d="M1 8q2-5 4-5l2 4q4-1 5 2l-3 2q1 5 8 4 4-1 5-5 2 9-7 13-13 1-14-15z" fill="#f68a1e"/></svg></span>
    <span class="app"><svg viewBox="0 0 24 24"><circle cx="12" cy="12" r="12" fill="#ddd"/><circle cx="12" cy="12" r="10.700" fill="#1e9bf0"/><path d="M20 4l-7 9-2-2z" fill="#f33"/><path d="M4 20l7-9 2 2z" fill="#fff"/></svg></span>
    <span class="app"><svg viewBox="0 0 24 24"><rect width="24" height="24" fill="#6dc13b"/><path d="M5 9l5-1 1-4q5-1 7 2 2 5 0 11-1 4-4 3-2-1-1-3l2-1q-1-2-3 0-5 1-7-7z" fill="#3b3b3b"/><path d="M5 8l5-5v5z" fill="#3b3b3b"/></svg></span>
    <span class="app"><svg viewBox="0 0 24 24"><path d="M12 0l10 5v14l-10 5-10-5V5z" fill="#c9c9c9"/><path d="M6 5h12v3l-7 9h7v3H6v-3l7-9H6z" fill="#b11c22"/></svg></span>
    <span class="app"><svg viewBox="0 0 24 24"><path d="M12 3h12v17H12z" fill="#e8eef7"/><path d="M14 7h8M14 10h8M14 13h8M14 16h8" stroke="#2b579a"/><path d="M0 3l14-3v24L0 21z" fill="#2b579a"/><text x="2" y="16" font-size="11" font-weight="700" font-family="Inter" fill="#fff">W</text></svg></span>
    <span class="app"><svg viewBox="0 0 24 24"><path d="M12 3h12v17H12z" fill="#e8f4ec"/><path d="M14 7h8M14 10h8M14 13h8M14 16h8" stroke="#217346" stroke-width="1.500"/><path d="M0 3l14-3v24L0 21z" fill="#217346"/><text x="3" y="16" font-size="11" font-weight="700" font-family="Inter" fill="#fff">X</text></svg></span>
    <span class="app"><svg viewBox="0 0 24 24"><path d="M4 1h16l3 10H1z" fill="#2a9df4"/><rect x="7" y="3" width="10" height="5" fill="#e8f4ff"/><path d="M11 11h2v10h-2z" fill="#cbd5dd"/><ellipse cx="12" cy="22" rx="5" ry="1.700" fill="#cbd5dd"/></svg></span>
    <span class="app"><svg viewBox="0 0 24 24"><circle cx="12" cy="12" r="12" fill="#e65fb0"/><circle cx="12" cy="12" r="10.700" fill="#fff"/><path d="M9 17V7l8-2v10" fill="none" stroke="#d84bd0" stroke-width="1.800"/><circle cx="7.500" cy="17" r="2.300" fill="#7a6bf0"/><circle cx="15.500" cy="15.500" r="2.300" fill="#e0559a"/></svg></span>
    <span class="app run"><svg viewBox="0 0 24 24"><circle cx="12" cy="12" r="12" fill="#1ed760"/><path d="M5 8.500q8-2.500 14.500 1M6 12.500q6-2 12 1M7 16q5-1.500 9.500 1" fill="none" stroke="#191414" stroke-width="2" stroke-linecap="round"/></svg></span>
    <span class="app"><svg viewBox="0 0 24 24"><circle cx="12" cy="12" r="12" fill="#f4f4f4"/><path d="M6 5l4 2h4l4-2q1 2 0 4 3 7-3 8v6H9v-3q-3 1-4-2 2 0 4 0v-1q-6-1-3-8-1-2 0-4z" fill="#4b2a7b"/></svg></span>
    <span class="app"><svg viewBox="0 0 24 24"><circle cx="12" cy="12" r="10.500" fill="#00aff0"/><circle cx="7" cy="7" r="7" fill="#00aff0"/><circle cx="17" cy="17" r="7" fill="#00aff0"/><text x="6.500" y="18.500" font-size="18" font-weight="800" font-family="Inter" fill="#fff">S</text></svg></span>
    <span class="app"><svg viewBox="0 0 24 24"><rect width="24" height="24" fill="#d9eefa"/><path d="M7 3h13l-1 4h-7l-1 4h5l-1 3h-5l-2 8H5z" fill="#d97b2b"/><text x="13" y="23" font-size="6" font-family="Inter" fill="#15a">360</text></svg></span>
    <span class="app"><svg viewBox="0 0 24 24"><rect width="24" height="24" fill="#f4dcd0"/><path d="M4 18L11 3h4l3 15h-4l-1-4H9l-2 4zM10 11h3l-1-5z" fill="#b3212b" fill-rule="evenodd"/><text x="15" y="23" font-size="6" font-family="Inter" fill="#b21">LT</text></svg></span>
    <span class="app adobe ps">Ps</span><span class="app adobe il run">Ai</span><span class="app adobe ae">Ae</span><span class="app adobe id">Id</span><span class="app adobe pr">Pr</span><span class="app adobe xd">Xd</span>
    <span class="app"><svg viewBox="0 0 24 24"><path d="M9 2l12-2 3 3v13l-10 3-4-4z" fill="#8278b5"/><path d="M9 2l12-2 3 3-12 2z" fill="#b4acd9"/><path d="M1 13l8-5 5 3v8l-8 4-5-4z" fill="#f2cf4a"/><path d="M2 13l6-3 3 3-6 3z" fill="#555"/><circle cx="6" cy="21" r="2.500" fill="#333"/><circle cx="17" cy="18" r="2.500" fill="#333"/></svg></span>
    <span class="app run"><svg viewBox="0 0 24 24"><circle cx="12" cy="12" r="11.500" fill="#5fb57d" stroke="#ddd"/><g fill="none" stroke="#e8fff0"><ellipse cx="12" cy="12" rx="8" ry="3" transform="rotate(15 12 12)"/><ellipse cx="12" cy="12" rx="8" ry="3" transform="rotate(75 12 12)"/><ellipse cx="12" cy="12" rx="8" ry="3" transform="rotate(135 12 12)"/></g></svg></span>
    <span class="app light-on"><svg viewBox="0 0 24 24"><circle cx="12" cy="12" r="12" fill="#00979d"/><use href="#arduino"/></svg></span>
    <span class="app amber-on"><svg viewBox="0 0 24 24"><circle cx="12" cy="12" r="11.500" fill="#4d8a92" stroke="#ccc"/><use href="#arduino"/></svg></span>
    <span class="app"><svg viewBox="0 0 24 24"><rect width="24" height="24" fill="#0c2237"/><text x="5" y="20" font-size="21" font-family="Liberation Serif" fill="#fff">P</text></svg></span>
    <span class="app"><svg viewBox="0 0 24 24"><rect width="24" height="24" fill="#2a8ee8"/><path d="M3 6l9 4 9-4-3 7-3 1 1 4-4-3-4 3 1-4-3-1z" fill="#fff"/></svg></span>
    <span class="app"><svg viewBox="0 0 24 24"><circle cx="12" cy="13" r="11" fill="#12425e"/><path d="M21 6q-7-6-13 0T8 18q6 5 13-1" fill="none" stroke="#1fb2ee" stroke-width="5.500"/></svg></span>
    <span class="app run"><svg viewBox="0 0 24 24"><rect x=".5" y="1" width="23" height="22" rx="1.500" fill="#1a1a1a" stroke="#888"/><path d="M3 5l2.500 2L3 9M7 9h4" stroke="#ddd" fill="none"/></svg></span>
    <i class="sep"></i>
    <span class="app"><svg viewBox="0 0 24 24"><use href="#dockfolder"/><path d="M8 19l5-10M11 9l5 10M7 16h10" stroke="#4aa9d4" stroke-width="1.500"/></svg></span>
    <span class="app"><svg viewBox="0 0 24 24"><use href="#dockfolder"/><circle cx="12" cy="14" r="5" fill="#4aa9d4"/><path d="M12 11v5M10 14l2 3 2-3" stroke="#7fd2f2" fill="none" stroke-width="1.500"/></svg></span>
    <span class="app"><svg viewBox="0 0 24 24"><path d="M3 1h18l-3 22q-6 2-12 0z" fill="#d9d9dc"/><ellipse cx="12" cy="2" rx="9" ry="2" fill="#f2f2f4"/></svg></span>
  </footer>
</div>
<script>
  const source = document.getElementById('source');
  source.scrollTop = source.scrollHeight;
</script>
</body>
</html>
```
FILE: styles.css
```css
* { box-sizing: border-box; }
body { margin: 0; font-family: Inter, "Liberation Sans", sans-serif; }
.defs { position: absolute; }
svg { display: block; flex: none; }
button { font: inherit; padding: 0; border: 0; background: none; }
i { font-style: normal; }

.desktop { position: relative; height: 100vh; min-height: 900px; overflow: hidden; background: linear-gradient(#262626 96%, #2d2d2d 97%, #161616); }

/* menu bar */
.menubar { display: flex; justify-content: space-between; align-items: center; height: 23px; padding: 0 23px 0 20px; background: #222; color: #fff; font-size: 14px; }
.menus { display: flex; align-items: center; gap: 17px; }
.menus svg { margin-right: 3px; }
.status { display: flex; align-items: center; gap: 10px; }
.clock, .who { font-weight: 500; }
.who { margin: 0 12px 0 6px; }

/* illustrator window */
.ai { position: absolute; inset: 24px 1px 51px 1px; display: flex; flex-direction: column; border-radius: 5px 5px 0 0; overflow: hidden; background: #484848; color: #ccc; font-size: 12px; }
.ai-title { display: flex; align-items: center; height: 34px; padding: 0 4px 0 8px; background: linear-gradient(#6a6a6a, #4e4e4e); border-bottom: 1px solid #2a2a2a; }
.light { width: 12px; height: 12px; margin-right: 8px; border-radius: 50%; background: #ddd; }
.ai-logo { margin: 0 20px 0 10px; color: #c58a68; font: 24px "Open Sans", sans-serif; }
.chip { width: 16px; margin-right: 20px; background: #333; border: 1px solid #ccc; color: #ddd; font: 10px/14px "Open Sans", sans-serif; text-align: center; }
.ai-arr { margin: 0 16px 0 3px; }
.stock { width: 100px; height: 19px; margin-left: auto; padding-left: 8px; background: #999; border: 1px solid #222; color: #666; line-height: 17px; }
.ai-control { display: flex; align-items: center; height: 34px; padding: 0 15px 0 5px; border-bottom: 1px solid #2a2a2a; background: #4b4b4b; }
.grip-v { width: 3px; height: 20px; margin-right: 7px; background: repeating-linear-gradient(#222 0 1px, #4b4b4b 1px 2px); }
.nosel { width: 88px; margin-right: 8px; border-right: 1px solid #333; color: #e0e0e0; font: 500 11px/30px "Noto Sans", sans-serif; }
.ai-control svg { margin-right: 9px; }
.stroke { margin: 0 7px 0 4px; border-bottom: 1px dotted #e08a3c; color: #e9963f; font: 500 10px/16px "Noto Sans", sans-serif; }
.ai-control .stroke + svg { margin: 0; }
.strokefield { width: 60px; height: 20px; background: #999; }
.ai-control .ctl-menu { margin: 0 0 0 auto; }
.ai-work { flex: 1; display: flex; min-height: 0; }
.tools, .panels { width: 38px; flex: none; background: #484848; }
.coll { height: 12px; padding-left: 3px; background: #2c2c2c; color: #bbb; font: 8px/11px "DejaVu Sans", sans-serif; }
.grip { display: block; width: 20px; height: 4px; margin: 3px auto 0; background: repeating-linear-gradient(90deg, #111 0 1px, #484848 1px 2px); }
.tools .grip { margin: 3px auto 9px; }
.tool-list svg { fill: #b5b5b5; }
.tools .grp { display: flex; flex-direction: column; align-items: center; margin: 0 4px; padding-bottom: 1px; border-bottom: 1px solid #333; }
.grp svg { width: 24px; height: 24px; padding: 2px; }
.grp .on { width: 28px; background: #333; border-radius: 2px; }
.swatches { padding: 4px 0 0 4px; }
.doc { flex: 1; display: flex; flex-direction: column; min-width: 0; margin: 0 2px; border-left: 1px solid #222; background: #2d2d2d; }
.doctab { display: flex; align-items: center; gap: 7px; height: 20px; padding-left: 12px; background: #333; color: #b5b5b5; font: 10px "Noto Sans", sans-serif; }
.ruler-h { position: relative; height: 16px; margin-right: 16px; background: repeating-linear-gradient(90deg, transparent 0 19px, #777 19px 20px) 54px 11px / auto 5px no-repeat #2a2a2a; color: #aaa; font: 10px/14px "Noto Sans", sans-serif; }
.ruler-h span { position: absolute; left: 54px; padding-left: 2px; border-left: 1px solid #888; height: 16px; }
.ruler-h span + span { left: 153px; }
.ruler-h .r300 { left: auto; right: 0; }
.docbody { flex: 1; display: flex; min-height: 0; }
.ruler-v { width: 16px; flex: none; overflow: hidden; background: repeating-linear-gradient(transparent 0 19px, #777 19px 20px) 11px 9px / 5px auto no-repeat #2a2a2a; color: #aaa; }
.ruler-v span { display: flex; align-items: flex-end; width: 13px; height: 100px; padding: 0 3px 2px; border-bottom: 1px solid #777; font: 11px/9px "Noto Sans", sans-serif; word-break: break-all; }
.ruler-v span:first-child { height: 90px; }
.canvas { flex: 1; min-width: 0; background: #5d5d5d; }
.artboard { display: flex; justify-content: space-between; height: calc(100% - 60px); margin-left: 163px; background: #fff; border: solid #888; border-width: 0 0 2px 2px; }
.cutline { width: 90px; height: 2px; margin-top: 574px; background: repeating-linear-gradient(90deg, #222 0 12px, transparent 12px 24px); }
.diagram { margin-top: 214px; font: 20px "Noto Sans", sans-serif; }
.vscroll { display: flex; flex-direction: column; justify-content: space-between; align-items: center; width: 16px; flex: none; margin-top: -16px; background: #333; border-left: 1px solid #222; color: #ddd; font-size: 9px; }
.vscroll i { width: 15px; height: 15px; background: #8c8c8c; }
.statusbar { display: flex; align-items: center; height: 16px; padding-left: 4px; background: #464646; border-top: 1px solid #2a2a2a; }
.zoomv, .pagev { width: 52px; padding-left: 3px; background: #a3a3a3; color: #111; font: 11px/15px "Noto Sans", sans-serif; }
.pagev { width: 42px; }
.dd { width: 15px; margin-right: 8px; background: #5a5a5a; color: #ddd; font: 12px/14px "DejaVu Sans", sans-serif; text-align: center; }
.statusbar svg { margin-right: 4px; }
.play { margin: 0 20px 0 auto; font-size: 8px; }
.panels .pg { padding-bottom: 6px; border-bottom: 1px solid #2a2a2a; }
.pg svg { width: 28px; height: 24px; margin: 4px auto 0; fill: #b5b5b5; padding: 1px 2px; }
.pg .on { background: #333; border-radius: 3px; }
.pg .grip { margin-top: 2px; }

/* browser window */
.chrome { position: absolute; inset: 23px 94px 38px 297px; display: flex; flex-direction: column; overflow: hidden; border-radius: 5px; background: #fff; box-shadow: 0 12px 44px rgba(0, 0, 0, .5); color: #111; font-size: 12px; }
.tabstrip { display: flex; align-items: center; flex: none; height: 37px; padding: 0 11px 0 12px; background: linear-gradient(#c9c9c9, #c4c4c4); box-shadow: inset 0 -1px #8f8f8f; }
.dot { width: 12px; height: 12px; margin-right: 8px; border-radius: 50%; background: #8e8e92; }
.tabs { display: flex; align-self: flex-end; margin-left: 1px; }
.tab { position: relative; display: flex; align-items: center; width: 241px; height: 29px; margin-right: -13px; padding: 0 14px 0 17px; color: #d0d0d0; }
.tab.active { z-index: 1; margin-right: 0; color: #f2f2f2; }
.shape { position: absolute; inset: 0; width: 241px; height: 29px; }
.fav { position: relative; width: 16px; height: 16px; margin-right: 4px; }
.tab span { position: relative; flex: 1; color: #111; white-space: nowrap; overflow: hidden; }
.tab .long { mask-image: linear-gradient(90deg, #000 88%, transparent); }
.tab button { position: relative; width: 14px; color: #555; font-size: 16px; line-height: 20px; }
.newtab { margin: 6px 0 0 -4px; }
.profile { margin: 2px 0 0 auto; }
.toolbar { display: flex; align-items: center; flex: none; height: 35px; padding: 0 10px; gap: 12px; background: #f2f2f2; }
.urlbar { flex: 1; display: flex; align-items: center; gap: 4px; height: 28px; padding: 0 4px 0 7px; background: #fff; border: 1px solid #b5b5b5; border-radius: 4px; font-size: 14px; }
.url { flex: 1; color: #777; }
.url b { color: #111; font-weight: 400; }
.exts { display: flex; align-items: center; gap: 10px; }
.exts svg { width: 18px; height: 18px; }
.grey { color: #c2c2c2; }
.bookmarks { display: flex; align-items: center; flex: none; height: 25px; padding: 0 10px 2px 12px; gap: 13px; background: #f2f2f2; border-bottom: 1px solid #b5b5b5; }
.bookmarks a { display: flex; align-items: center; gap: 4px; color: #111; text-decoration: none; white-space: nowrap; }
.bookmarks .site { gap: 5px; padding-right: 2px; }
.bookmarks svg { width: 16px; height: 16px; }
.bookmarks .other { margin-left: auto; }

/* site */
.page { flex: 1; overflow: hidden; color: #55402f; font: 15px/21px "Liberation Sans", Arial, sans-serif; }
.wrap { width: 960px; margin: 0 auto; }
.masthead { display: flex; align-items: center; height: 64px; }
.logo { display: flex; align-items: center; width: 319px; color: #ee7015; font: 900 35px/44px Inter, sans-serif; }
.logo span { width: 112px; margin-right: 8px; background: #ee7015; color: #fff; text-align: center; }
.logo b { font-weight: 900; }
.slogan { display: flex; gap: 8px; color: #fff; font: 700 26px/27px "DejaVu Sans", sans-serif; }
.slogan span { height: 27px; padding: 0 1px; background: #5d9eea; }
.navband { height: 47px; background: #5d9eea; }
.mainnav { display: flex; font: 500 21px/42px "Noto Sans", sans-serif; }
.mainnav a { height: 47px; padding: 0 20px; border-right: 1px solid #fff; color: #fff; text-decoration: none; }
.mainnav .current { position: relative; width: 156px; padding: 9px 0 0 24px; border-left: 1px solid #fff; border-right: 0; }
.current svg { position: absolute; left: 0; top: 0; }
.current span { position: relative; }
.columns { display: grid; grid-template-columns: 728px 210px; gap: 22px; }
h1, h2, h3, p { margin: 0; }
main { padding-top: 32px; }
h1 { margin-bottom: 14px; color: #e85f30; font: 700 29px/34px "Noto Sans", sans-serif; }
p { margin-bottom: 15px; }
main a { color: #2d5f9e; }
.converter { padding: 18px 29px 20px 20px; border: 1px dashed #8f8f8f; border-radius: 12px; background: #deecfa; }
h2 { margin-bottom: 15px; color: #e85f30; font: 700 19px/24px "Noto Sans", sans-serif; }
.opts { display: flex; flex-direction: column; margin-bottom: 15px; }
.pref { margin-bottom: 15px; }
.enc { margin-bottom: 14px; }
input[type=radio], input[type=checkbox] { appearance: none; width: 14px; height: 14px; margin: 0 7px 0 2px; border: 1px solid #b5b5b5; border-radius: 50%; background: #fff; vertical-align: -3px; }
input[type=radio]:checked { border-color: #8f8f93; background: radial-gradient(circle, #fff 0 2px, #8f8f93 3px); }
input[type=checkbox] { width: 12px; height: 12px; margin: 0 8px 0 3px; border-radius: 3px; vertical-align: -2px; }
input[type=checkbox]:checked { border-color: #8f8f93; background: #8f8f93; }
input[type=checkbox]:checked::before { content: "✓"; display: block; color: #fff; font: 700 10px/10px "DejaVu Sans", sans-serif; text-align: center; }
.source { position: relative; }
textarea { display: block; width: 677px; margin: 0; resize: vertical; border: 1px solid #999; border-top-color: #666; background: #fff; color: #000; font: 16px/18px "Liberation Sans", Arial, sans-serif; }
#source { height: 120px; padding: 4px; border: 2px solid #8f9298; box-shadow: 0 1px 3px #999; overflow: hidden; white-space: pre; }
#result { height: 174px; margin-bottom: 20px; }
.typo { position: absolute; height: 3px; background: repeating-linear-gradient(90deg, #f0604a 0 2px, transparent 2px 3px); }
.typo-top { left: 304px; top: 3px; width: 87px; }
.typo-mid { left: 607px; top: 75px; width: 56px; }
.caret { position: absolute; left: 657px; top: 96px; width: 1px; height: 18px; background: #000; }
.buttons { display: flex; gap: 34px; margin: 20px 0 33px; }
.btn { height: 41px; padding: 0 12px; border: 1px solid #a03d1c; border-radius: 4px; background: #e85f30; color: #fff; font: 700 19px "Noto Sans", sans-serif; }
.reset { background: #b37e6b; border-color: #9a5a44; }
.buttons + h2 { margin-bottom: 0; }
.copyhint { display: block; margin-bottom: 14px; }
.clip { height: 35px; padding: 0 10px 2px; background: #3f74b0; border-color: #2d5584; font-size: 16px; font-weight: 600; }
.side { padding-top: 47px; }
.lang { height: 106px; margin-bottom: 30px; padding: 13px 18px; border-radius: 10px; background: #e85f30; color: #fff; font-size: 17px; line-height: 24px; }
.lang div { display: flex; flex-wrap: wrap; gap: 0 26px; padding-left: 2px; font-size: 18px; }
.lang a { color: #fff; }
.search { display: flex; gap: 4px; height: 20px; margin-bottom: 15px; }
.search input { flex: 1; min-width: 0; border: 1px solid #bbb; }
.search button { width: 64px; background: #4590d5; color: #fff; font-weight: 700; font-size: 13px; line-height: 20px; }
.box { margin-bottom: 15px; border: 1px solid #4590d5; border-top: 0; border-radius: 10px 10px 0 0; overflow: hidden; }
h3 { margin: 0 -1px; padding: 6px; padding-left: 14px; background: #5d9eea; border-bottom: 1px solid #4590d5; color: #fff; font-size: 19px; line-height: 21px; }
.box ul { margin: 0; padding: 0 2px; list-style: none; }
.box li { padding: 3px 0 3px 13px; border-top: 1px dashed #7db4ea; font-size: 11px; text-transform: uppercase; }
.box li a { color: #1c4f9c; text-decoration: none; }
.ad { display: block; margin-bottom: 18px; border: 1px solid #2e6fd4; text-decoration: none; color: #fff; text-align: center; font-family: "Open Sans", sans-serif; font-weight: 300; }
.ad span { display: block; }
.ad-top { height: 122px; padding-top: 10px; background: #2e6fd4; }
.ad .l1 { font-size: 18px; line-height: 17px; }
.ad .l2 { margin-bottom: 1px; font-size: 23px; line-height: 24px; }
.ad .l2 b { font: 900 22px Inter, sans-serif; }
.ad .learn { display: flex; align-items: center; justify-content: center; gap: 18px; width: 161px; height: 35px; margin: 0 auto; border-radius: 5px; background: linear-gradient(90deg, #63bf2f, #84d133); font-size: 20px; }
.ad .ad-bot { display: flex; align-items: center; justify-content: center; gap: 8px; height: 51px; background: #fcfcfc; color: #3575d3; font-size: 23px; font-weight: 400; }

/* dock */
.dock { position: absolute; left: 50%; bottom: 0; display: flex; align-items: flex-start; gap: 5px; height: 37px; padding: 3px 6px 0; transform: translateX(-50%); background: #282828; border-top: 1px solid #1a1a1a; }
.app { display: flex; flex-direction: column; align-items: center; gap: 4px; width: 24px; }
.app svg { width: 24px; height: 24px; }
.run::after { content: ""; width: 3px; height: 3px; border-radius: 50%; background: #bbb; }
.sep { width: 1px; height: 30px; margin: 0 3px 0 4px; background: #555; }
.adobe { border: 1px solid; height: 24px; font: 600 14px/22px "Open Sans", sans-serif; }
.ps { color: #2fc4d6; background: #001d26; }
.il { color: #e0751c; background: #261300; gap: 6px; }
.ae { color: #b9a0ee; background: #1c0836; }
.id { color: #d83a72; background: #2a0512; }
.pr { color: #c76ae6; background: #270733; }
.xd { color: #e64bc8; background: #2e0424; }
.light-on { color: #fff; }
.amber-on { color: #f5c56a; }
```
